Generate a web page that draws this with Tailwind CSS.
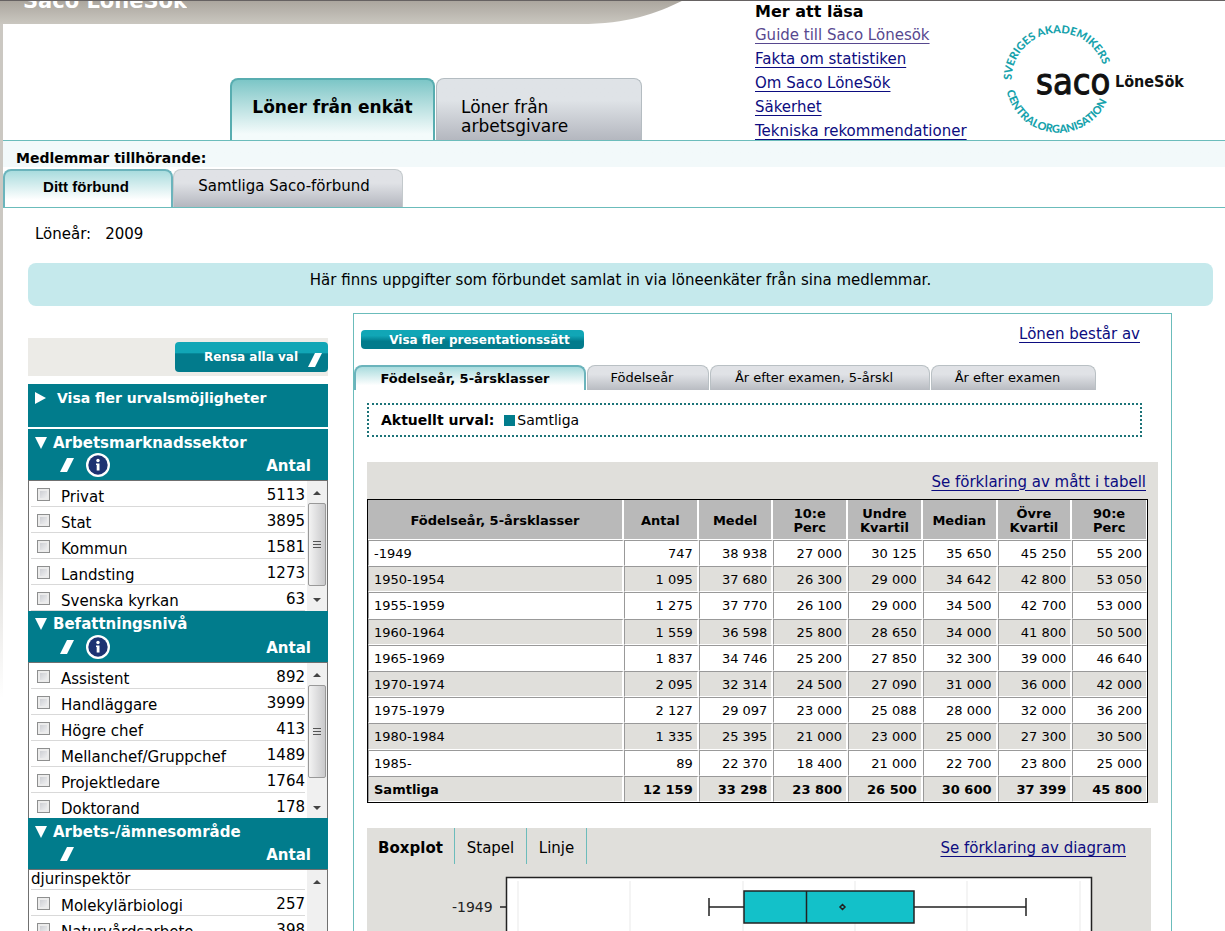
<!DOCTYPE html>
<html lang="sv">
<head>
<meta charset="utf-8">
<title>Saco LöneSök</title>
<script src="https://cdn.jsdelivr.net/npm/@tailwindcss/browser@4"></script>
</head>
<body class="flex h-screen overflow-hidden bg-white font-['DejaVu_Sans',Verdana,sans-serif] text-[15px] leading-5 text-black">
<svg class="hidden">
  <symbol id="eraser" viewBox="0 0 14 14"><path d="M7 0H14L7 14H0Z" fill="#fff"/></symbol>
  <symbol id="info" viewBox="0 0 24 24"><circle cx="12" cy="12" r="12" fill="#fff"/><circle cx="12" cy="12" r="9.700" fill="#1d3272"/><circle cx="12" cy="7.500" r="1.700" fill="#fff"/><path d="M10 10.500H13.500V17.500H10.700V12H10Z" fill="#fff"/></symbol>
  <symbol id="up" viewBox="0 0 8 5"><path d="M4 0L8 4H0Z" fill="#444"/></symbol>
  <symbol id="down" viewBox="0 0 8 5"><path d="M0 0H8L4 4Z" fill="#444"/></symbol>
</svg>
<div class="w-[3px] shrink-0 bg-linear-to-b from-[#cbc8c2] from-50% to-white to-75%"></div>
<div class="flex min-w-0 flex-1 flex-col">
  <header class="relative flex h-[141px] shrink-0 border-b border-[#6bbcbb]">
    <svg class="absolute -left-[3px] top-0 h-6 w-[700px]" viewBox="0 0 700 24">
      <defs><linearGradient id="bar" x1="0" y1="0" x2="0" y2="1"><stop offset="0" stop-color="#aaa59d"/><stop offset="1" stop-color="#cac7c0"/></linearGradient></defs>
      <path d="M0 0H684C655 14 628 24 580 24H0Z" fill="url(#bar)"/>
    </svg>
    <div class="absolute -left-[3px] right-0 top-0 h-px bg-[#666262]"></div>
    <div class="absolute left-0 top-px h-5 overflow-hidden"><h1 class="-mt-3.5 pl-5 text-[21px] leading-7 font-bold text-white">Saco LöneSök</h1></div>
    <nav class="flex w-[752px] shrink-0 items-end pl-[227px]" aria-label="Datakälla">
      <button class="h-[62px] w-[205px] rounded-t-lg border-2 border-b-0 border-[#58adb0] bg-linear-to-b from-[#7cc6c7] to-[#f4fbfb] to-90% pb-1.5 text-[17px] font-bold">Löner från enkät</button>
      <button class="ml-px h-[62px] w-[206px] rounded-t-lg border border-b-0 border-[#b4bcc1] bg-linear-to-b from-[#dfe3e7] from-35% to-[#b4b7bf] pt-3.5 pr-10 pl-6 text-left text-[17px] leading-[19px]">Löner från arbetsgivare</button>
    </nav>
    <section class="w-[240px] shrink-0 pt-0.5">
      <h2 class="text-base leading-5 font-bold">Mer att läsa</h2>
      <ul class="flex flex-col gap-1 pt-[3px] text-[#0c0c80] [&_a]:underline [&_a]:underline-offset-3">
        <li><a href="#" class="text-[#57488f]">Guide till Saco Lönesök</a></li>
        <li><a href="#">Fakta om statistiken</a></li>
        <li><a href="#">Om Saco LöneSök</a></li>
        <li><a href="#">Säkerhet</a></li>
        <li><a href="#">Tekniska rekommendationer</a></li>
      </ul>
    </section>
    <svg class="mt-5 h-[120px] w-[200px] shrink-0" viewBox="0 0 200 120" role="img" aria-label="Saco LöneSök">
      <defs><path id="arcTop" d="M16.500 60A47 47 0 0 1 110.500 60"/><path id="arcBottom" d="M11.700 71A53 53 0 0 0 116.500 60"/></defs>
      <g fill="#16a2ac" font-family="Lato" font-weight="900" font-size="11"><text><textPath href="#arcTop">SVERIGES AKADEMIKERS</textPath></text><text><textPath href="#arcBottom">CENTRALORGANISATION</textPath></text></g>
      <g fill="#111" font-family="'DejaVu Sans Condensed','Open Sans',sans-serif"><text x="41" y="74" font-size="36" stroke="#111">saco</text><text x="120" y="67" font-size="16" font-weight="bold">LöneSök</text></g>
    </svg>
  </header>

  <section class="flex h-[67px] shrink-0 flex-col border-b border-[#6bbcbb] bg-linear-to-b from-[#f2f9fa] from-40% to-white to-40%">
    <h2 class="h-[28px] pt-[7px] pl-[13px] text-sm font-bold">Medlemmar tillhörande:</h2>
    <nav class="flex flex-1" aria-label="Förbund">
      <button class="w-[170px] rounded-t-lg border-2 border-b-0 border-[#6bb4bc] bg-linear-to-b from-[#a9dcde] to-white to-80% pr-1 pb-1 font-['Liberation_Sans',Arial,sans-serif] text-[15px] font-bold">Ditt förbund</button>
      <button class="w-[230px] rounded-t-lg border border-b-0 border-[#c3c9cc] bg-linear-to-b from-[#e0e2e6] from-35% to-[#b4b7bf] pr-2 pb-1.5">Samtliga Saco-förbund</button>
    </nav>
  </section>

  <p class="mt-4 ml-8 flex shrink-0 gap-3.5"><span>Löneår:</span><span>2009</span></p>
  <p class="mt-[19px] mr-3 ml-[25px] h-[43px] shrink-0 rounded-lg bg-[#c5e9ec] pt-[7px] text-center">Här finns uppgifter som förbundet samlat in via löneenkäter från sina medlemmar.</p>

  <div class="mt-[7px] ml-[25px] flex min-h-0 flex-1 items-start gap-[25px]">
    <aside class="mt-[25px] w-[300px] shrink-0">
      <div class="flex h-[38px] items-center justify-end bg-[#ecebe7]">
        <button class="flex h-[30px] w-[153px] items-center justify-end gap-2.5 rounded bg-linear-to-b from-[#11a6b6] from-35% to-[#027b8c] to-40% pr-1.5 text-xs font-bold text-white">Rensa alla val<svg class="mt-1.5 size-3.5"><use href="#eraser"/></svg></button>
      </div>
      <button class="mt-2 flex h-[43px] w-full items-start gap-2.5 bg-[#017c8c] pt-1 pl-[7px] text-left text-sm leading-5 font-bold text-white"><svg class="mt-1 h-3 w-3" viewBox="0 0 12 12"><path d="M0 0L11 6L0 12Z" fill="#fff"/></svg>Visa fler urvalsmöjligheter</button>

      <section class="mt-0.5">
        <header class="h-[51px] bg-[#017c8c] pt-1 pr-[17px] pl-[7px] font-bold text-white">
          <h3 class="flex items-center gap-1.5"><svg class="h-3 w-3" viewBox="0 0 12 12"><path d="M0 0H12L6 12Z" fill="#fff"/></svg>Arbetsmarknadssektor</h3>
          <div class="flex items-center pl-[25px] pt-px"><button aria-label="Rensa"><svg class="size-3.5"><use href="#eraser"/></svg></button><button class="ml-3 -my-1" aria-label="Information"><svg class="size-6"><use href="#info"/></svg></button><span class="ml-auto pt-0.5">Antal</span></div>
        </header>
        <div class="flex h-[131px] overflow-hidden border border-b-0 border-[#707070]">
          <ul class="flex-1 pr-0.5 pl-0.5 [&_label]:flex [&_label]:h-[26px] [&_label]:border-b [&_label]:border-[#d9d9d9] [&_input]:mt-[7px] [&_input]:mr-[11px] [&_input]:ml-1.5 [&_input]:size-[13px] [&_input]:appearance-none [&_input]:border [&_input]:border-[#8e8f8f] [&_input]:bg-linear-to-br [&_input]:from-[#c4c6cc] [&_input]:to-[#f8f8f8] [&_input]:shadow-[inset_0_0_0_2px_#ececec] [&_span]:pt-1.5 [&_b]:ml-auto [&_b]:pt-1 [&_b]:font-normal">
            <li><label><input type="checkbox"><span>Privat</span><b>5113</b></label></li>
            <li><label><input type="checkbox"><span>Stat</span><b>3895</b></label></li>
            <li><label><input type="checkbox"><span>Kommun</span><b>1581</b></label></li>
            <li><label><input type="checkbox"><span>Landsting</span><b>1273</b></label></li>
            <li><label><input type="checkbox"><span>Svenska kyrkan</span><b>63</b></label></li>
          </ul>
          <div class="flex w-5 flex-col items-center bg-[#f0f0f0]">
            <svg class="mt-2.5 h-[5px] w-2"><use href="#up"/></svg>
            <div class="mt-[7px] mr-px grid h-[83px] w-[18px] place-items-center rounded-xs border border-[#999] bg-linear-to-r from-[#f3f3f3] to-[#c9c9cb]"><svg class="h-2 w-2" viewBox="0 0 8 8"><path d="M0 .5H8M0 3.500H8M0 6.500H8" stroke="#555"/></svg></div>
            <svg class="mt-3 h-[5px] w-2"><use href="#down"/></svg>
          </div>
        </div>
      </section>

      <section>
        <header class="h-[51px] bg-[#017c8c] pt-[3px] pr-[17px] pl-[7px] font-bold text-white">
          <h3 class="flex items-center gap-1.5"><svg class="h-3 w-3" viewBox="0 0 12 12"><path d="M0 0H12L6 12Z" fill="#fff"/></svg>Befattningsnivå</h3>
          <div class="flex items-center pl-[25px] pt-0.5"><button aria-label="Rensa"><svg class="size-3.5"><use href="#eraser"/></svg></button><button class="ml-3 -my-1" aria-label="Information"><svg class="size-6"><use href="#info"/></svg></button><span class="ml-auto pt-0.5">Antal</span></div>
        </header>
        <div class="flex h-[156px] overflow-hidden border border-b-0 border-[#707070]">
          <ul class="flex-1 pr-0.5 pl-0.5 [&_label]:flex [&_label]:h-[26px] [&_label]:border-b [&_label]:border-[#d9d9d9] [&_input]:mt-[7px] [&_input]:mr-[11px] [&_input]:ml-1.5 [&_input]:size-[13px] [&_input]:appearance-none [&_input]:border [&_input]:border-[#8e8f8f] [&_input]:bg-linear-to-br [&_input]:from-[#c4c6cc] [&_input]:to-[#f8f8f8] [&_input]:shadow-[inset_0_0_0_2px_#ececec] [&_span]:pt-1.5 [&_b]:ml-auto [&_b]:pt-1 [&_b]:font-normal">
            <li><label><input type="checkbox"><span>Assistent</span><b>892</b></label></li>
            <li><label><input type="checkbox"><span>Handläggare</span><b>3999</b></label></li>
            <li><label><input type="checkbox"><span>Högre chef</span><b>413</b></label></li>
            <li><label><input type="checkbox"><span>Mellanchef/Gruppchef</span><b>1489</b></label></li>
            <li><label><input type="checkbox"><span>Projektledare</span><b>1764</b></label></li>
            <li><label><input type="checkbox"><span>Doktorand</span><b>178</b></label></li>
          </ul>
          <div class="flex w-5 flex-col items-center bg-[#f0f0f0]">
            <svg class="mt-2.5 h-[5px] w-2"><use href="#up"/></svg>
            <div class="mt-[7px] mr-px grid h-[93px] w-[18px] place-items-center rounded-xs border border-[#999] bg-linear-to-r from-[#f3f3f3] to-[#c9c9cb]"><svg class="h-2 w-2" viewBox="0 0 8 8"><path d="M0 .5H8M0 3.500H8M0 6.500H8" stroke="#555"/></svg></div>
            <svg class="mt-7 h-[5px] w-2"><use href="#down"/></svg>
          </div>
        </div>
      </section>

      <section>
        <header class="h-[51px] bg-[#017c8c] pt-1 pr-[17px] pl-[7px] font-bold text-white">
          <h3 class="flex items-center gap-1.5"><svg class="h-3 w-3" viewBox="0 0 12 12"><path d="M0 0H12L6 12Z" fill="#fff"/></svg>Arbets-/ämnesområde</h3>
          <div class="flex items-center pl-[25px] pt-px"><button aria-label="Rensa"><svg class="size-3.5"><use href="#eraser"/></svg></button><span class="ml-auto pt-0.5">Antal</span></div>
        </header>
        <div class="flex h-[156px] overflow-hidden border border-b-0 border-[#707070]">
          <ul class="flex-1 pr-0.5 pl-0.5 [&_label]:flex [&_label]:h-[26px] [&_label]:border-b [&_label]:border-[#d9d9d9] [&_input]:mt-[7px] [&_input]:mr-[11px] [&_input]:ml-1.5 [&_input]:size-[13px] [&_input]:appearance-none [&_input]:border [&_input]:border-[#8e8f8f] [&_input]:bg-linear-to-br [&_input]:from-[#c4c6cc] [&_input]:to-[#f8f8f8] [&_input]:shadow-[inset_0_0_0_2px_#ececec] [&_span]:pt-1.5 [&_b]:ml-auto [&_b]:pt-1 [&_b]:font-normal">
            <li class="h-5 border-b border-[#d9d9d9] leading-[18px]">djurinspektör</li>
            <li><label><input type="checkbox"><span>Molekylärbiologi</span><b>257</b></label></li>
            <li><label><input type="checkbox"><span>Naturvårdsarbete</span><b>398</b></label></li>
          </ul>
          <div class="flex w-5 flex-col items-center bg-[#f0f0f0]"><svg class="mt-2.5 h-[5px] w-2"><use href="#up"/></svg></div>
        </div>
      </section>
    </aside>

    <main class="mr-[53px] min-w-0 flex-1 border border-[#6bbcbb] pb-5">
      <div class="flex h-[51px] items-start justify-between pr-[31px] pl-[7px]">
        <button class="mt-4 h-[19px] w-[223px] rounded bg-linear-to-b from-[#11a6b6] from-30% to-[#027b8c] to-60% pl-3.5 text-xs leading-4 font-bold text-white">Visa fler presentationssätt</button>
        <a href="#" class="mt-2.5 text-[#0c0c80] underline underline-offset-3">Lönen består av</a>
      </div>
      <nav class="flex h-[25px] gap-px text-[13px]" aria-label="Presentation">
        <button class="w-[232px] rounded-t-lg border-2 border-b-0 border-[#6bb4bc] bg-linear-to-b from-[#a9dcde] to-white to-80% pr-2.5 leading-5 font-bold">Födelseår, 5-årsklasser</button>
        <button class="w-[122px] rounded-t-lg border border-b-0 border-[#b9c0c4] bg-linear-to-b from-[#e0e2e6] from-35% to-[#b9bcc2] pr-3">Födelseår</button>
        <button class="w-[220px] rounded-t-lg border border-b-0 border-[#b9c0c4] bg-linear-to-b from-[#e0e2e6] from-35% to-[#b9bcc2] pr-3">År efter examen, 5-årskl</button>
        <button class="w-[165px] rounded-t-lg border border-b-0 border-[#b9c0c4] bg-linear-to-b from-[#e0e2e6] from-35% to-[#b9bcc2] pr-3">År efter examen</button>
      </nav>
      <p class="mt-[13px] mr-[29px] ml-[13px] flex h-[34px] items-center border-2 border-dotted border-[#1c7378] pl-3 text-sm"><strong>Aktuellt urval:</strong><span class="mr-0.5 ml-2.5 size-[11px] bg-[#017c8c]"></span>Samtliga</p>

      <section class="mt-[25px] mr-[13px] ml-[13px] bg-[#e0dfdb] pr-[10px]">
        <div class="flex h-[37px] items-center justify-end pt-0.5 pr-0.5"><a href="#" class="text-[#0c0c80] underline underline-offset-3">Se förklaring av mått i tabell</a></div>
        <table class="h-[304px] w-full table-fixed border-separate border-spacing-0 border border-black text-right text-[13px] leading-[14px] [&_td]:border-t [&_td]:border-t-[#999] [&_td]:border-r-2 [&_td]:border-r-white [&_td]:border-b [&_td]:border-b-white [&_td]:border-l [&_td]:border-l-[#999] [&_td]:pt-0.5 [&_td]:pr-1 [&_th]:border-r-2 [&_th]:border-b [&_th]:border-white [&_th]:pt-0.5 [&_td:first-child]:pl-[5px] [&_td:first-child]:text-left [&_tr>*:last-child]:border-r">
          <colgroup><col class="w-[256px]"><col><col><col><col><col><col><col></colgroup>
          <thead><tr class="h-[40px] bg-[#b9b9b9] text-center"><th>Födelseår, 5-årsklasser</th><th>Antal</th><th>Medel</th><th>10:e<br>Perc</th><th>Undre<br>Kvartil</th><th>Median</th><th>Övre<br>Kvartil</th><th>90:e<br>Perc</th></tr></thead>
          <tbody class="[&_tr:nth-child(odd)]:bg-white [&_tr:nth-child(even)]:bg-[#e0dfdb]">
            <tr><td>-1949</td><td>747</td><td>38 938</td><td>27 000</td><td>30 125</td><td>35 650</td><td>45 250</td><td>55 200</td></tr>
            <tr><td>1950-1954</td><td>1 095</td><td>37 680</td><td>26 300</td><td>29 000</td><td>34 642</td><td>42 800</td><td>53 050</td></tr>
            <tr><td>1955-1959</td><td>1 275</td><td>37 770</td><td>26 100</td><td>29 000</td><td>34 500</td><td>42 700</td><td>53 000</td></tr>
            <tr><td>1960-1964</td><td>1 559</td><td>36 598</td><td>25 800</td><td>28 650</td><td>34 000</td><td>41 800</td><td>50 500</td></tr>
            <tr><td>1965-1969</td><td>1 837</td><td>34 746</td><td>25 200</td><td>27 850</td><td>32 300</td><td>39 000</td><td>46 640</td></tr>
            <tr><td>1970-1974</td><td>2 095</td><td>32 314</td><td>24 500</td><td>27 090</td><td>31 000</td><td>36 000</td><td>42 000</td></tr>
            <tr><td>1975-1979</td><td>2 127</td><td>29 097</td><td>23 000</td><td>25 088</td><td>28 000</td><td>32 000</td><td>36 200</td></tr>
            <tr><td>1980-1984</td><td>1 335</td><td>25 395</td><td>21 000</td><td>23 000</td><td>25 000</td><td>27 300</td><td>30 500</td></tr>
            <tr><td>1985-</td><td>89</td><td>22 370</td><td>18 400</td><td>21 000</td><td>22 700</td><td>23 800</td><td>25 000</td></tr>
            <tr class="font-bold"><td>Samtliga</td><td>12 159</td><td>33 298</td><td>23 800</td><td>26 500</td><td>30 600</td><td>37 399</td><td>45 800</td></tr>
          </tbody>
        </table>
      </section>

      <section class="mt-[25px] mr-5 ml-[13px] bg-[#e0dfdb]">
        <div class="flex h-[36px] items-stretch pr-[25px]">
          <button class="w-[88px] border-r border-[#6bbcbb] pt-1 font-bold">Boxplot</button>
          <button class="w-[72px] border-r border-[#6bbcbb] pt-1">Stapel</button>
          <button class="w-[60px] border-r border-[#6bbcbb] pt-1">Linje</button>
          <a href="#" class="ml-auto pt-2.5 text-[#0c0c80] underline underline-offset-3">Se förklaring av diagram</a>
        </div>
        <svg class="mt-3 h-[200px] w-[784px]" viewBox="0 0 784 200" role="img" aria-label="Boxplot">
          <path d="M139.500 1.500H724.500V220H139.500Z" fill="#fff" stroke="#222" stroke-width="1.500"/>
          <path d="M151 5V200M263 5V200M376 5V200M488 5V200M600 5V200M713 5V200" stroke="#e9e9e9"/>
          <g fill="none" stroke="#222" stroke-width="1.500"><path d="M133 31H139M342 22V40M342 31H377M547 31H659M659 22V40"/><path d="M377 15H547V47H377Z" fill="#13c1c9"/><path d="M439.500 15V47"/><path d="M475.500 28.500L478 31L475.500 33.500L473 31Z"/></g>
          <text x="85" y="36" font-size="14" fill="#222">-1949</text>
        </svg>
      </section>
    </main>
  </div>
</div>
</body>
</html>
